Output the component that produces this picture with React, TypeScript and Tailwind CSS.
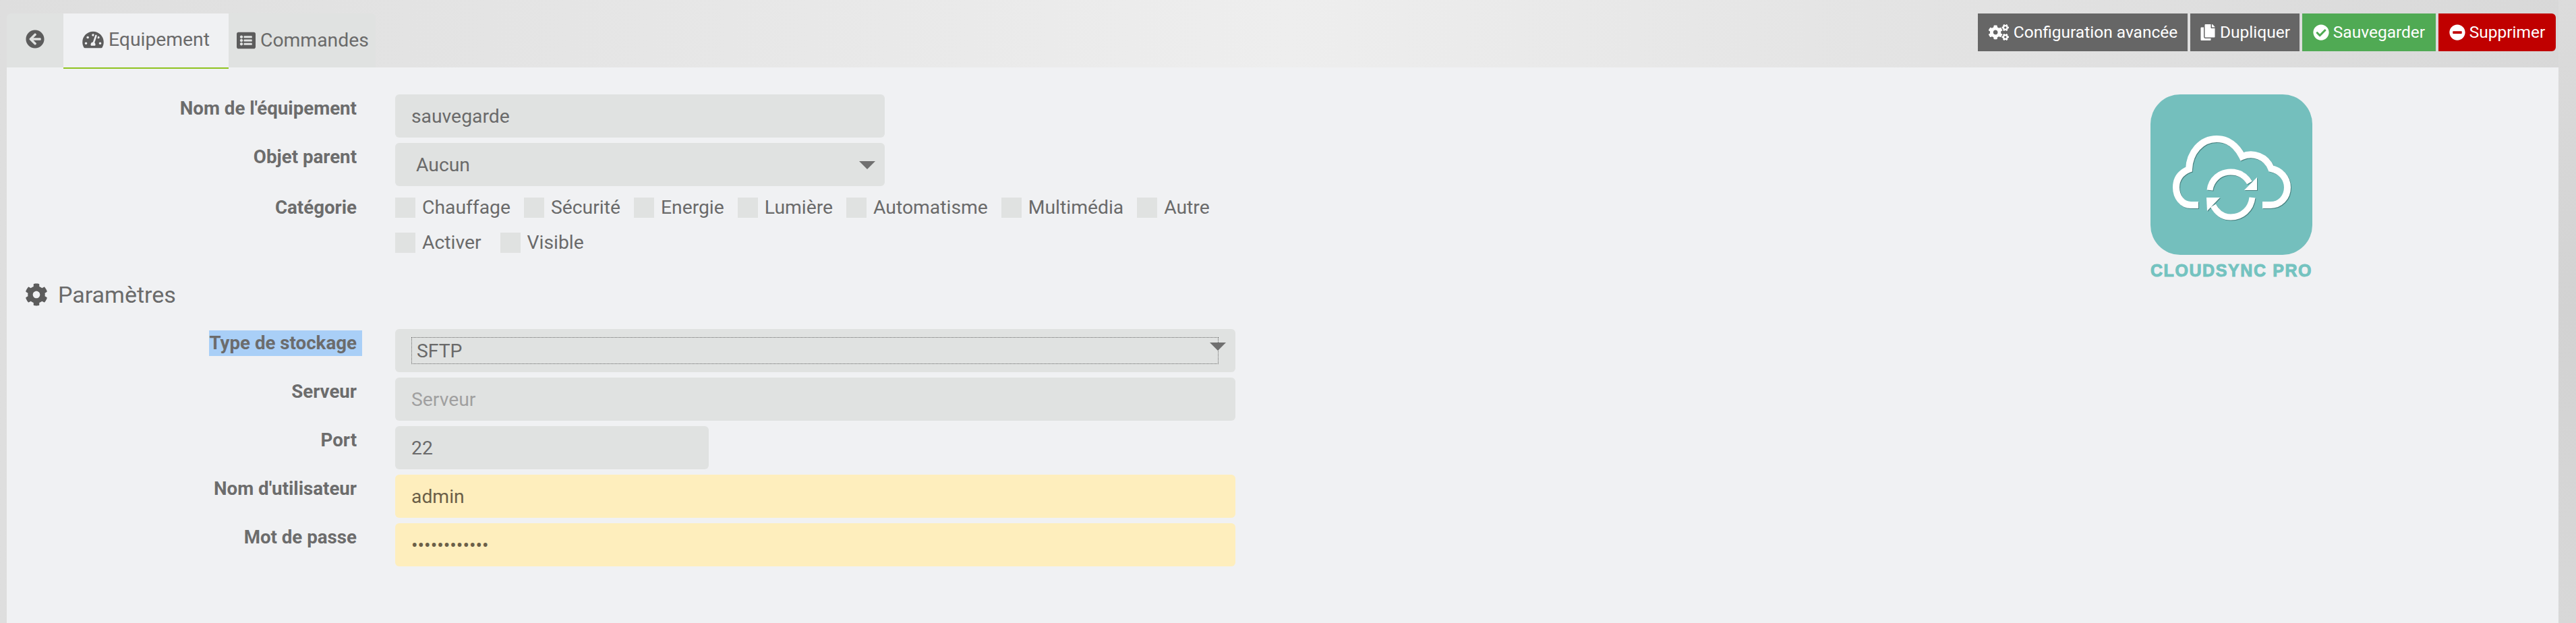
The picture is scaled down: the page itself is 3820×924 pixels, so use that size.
import { ReactNode } from "react";
import {
  FaArrowCircleLeft,
  FaTachometerAlt,
  FaListAlt,
  FaCog,
  FaCogs,
  FaCopy,
  FaCheckCircle,
  FaMinusCircle,
} from "react-icons/fa";

const Row = ({ label, selected, children }: { label: string; selected?: boolean; children: ReactNode }) => (
  <div className="flex">
    <div className="w-[519px] shrink-0 text-right font-bold text-[27.7px] text-[#6c6c6c] leading-[38px] mt-[2px]">
      {selected ? <span className="inline-block bg-[#a9cff7] pr-2 -mr-2 -mt-px">{label}</span> : label}
    </div>
    <div className="ml-[57px] flex-1">{children}</div>
  </div>
);

const Field = ({ children, className }: { children?: ReactNode; className: string }) => (
  <div className={`h-16 rounded-md flex items-center pl-6 pt-[2px] ${className}`}>{children}</div>
);

const Arrow = () => (
  <svg width="24" height="12" viewBox="0 0 24 12" className="shrink-0">
    <path d="M0 0H24L12 12Z" fill="#707070" />
  </svg>
);

const Check = ({ label }: { label: string }) => (
  <div className="flex items-center h-[30px]">
    <span className="w-[30px] h-[30px] bg-[#e0e2e1] mr-[10px]"></span>
    <span>{label}</span>
  </div>
);

const Btn = ({ icon, label, className }: { icon: ReactNode; label: string; className: string }) => (
  <div className={`h-14 flex items-center justify-center gap-[6px] text-white text-[24.5px] ${className}`}>
    {icon}
    <span>{label}</span>
  </div>
);

const Logo = () => (
  <div className="w-60 mr-[365px] shrink-0">
    <div className="h-[238px] rounded-[44px] bg-[#74bfbd] flex">
      <svg viewBox="0 0 240 238" className="w-60 h-[238px] drop-shadow-[1px_1px_0_rgba(40,80,80,0.55)]">
        <path
          d="M71 164H60C47 164 38 152 38 138C38 125 45 116 57 111C58 86 75 66 98 66C115 66 128 76 136 92C152 85 172 92 179 110C193 113 203 124 203 138C203 153 192 164 178 164H166"
          fill="none"
          stroke="#fff"
          strokeWidth="10"
        />
        <path d="M88 142C90 126 103 115 119 115C131 115 141 121 147 131" fill="none" stroke="#fff" strokeWidth="9" />
        <path d="M158 123V142H139Z" fill="#fff" />
        <path d="M151 153C149 170 136 182 119 182C108 182 99 176 93 165" fill="none" stroke="#fff" strokeWidth="9" />
        <path d="M83 153H103L84 173Z" fill="#fff" />
      </svg>
    </div>
    <div className="mt-[9px] flex justify-center text-[#74c3c0] font-['Liberation_Sans',sans-serif] font-bold text-[25px] leading-[28px] tracking-[1.6px] whitespace-nowrap [-webkit-text-stroke:1px_#74c3c0]">
      CLOUDSYNC PRO
    </div>
  </div>
);

export default function App() {
  return (
    <div className="w-[3820px] h-[924px] overflow-hidden flex bg-gradient-to-r from-[#dedede] via-[#eeeeee] to-[#d8d8d8] font-['Roboto',sans-serif] text-[28.3px] text-[#6a6a6a]">
      <div className="w-[10px] shrink-0"></div>
      <div className="flex-1 flex flex-col">
        <div className="h-[100px] pt-5 pr-1 flex justify-between items-start shrink-0">
          <div className="flex h-20 items-start">
            <div className="w-[84px] h-20 flex items-center justify-center bg-[#e0e2e1] rounded-tl-md text-[#5c5c5c]">
              <FaArrowCircleLeft className="w-7 h-7 -mt-1" />
            </div>
            <div className="relative z-10 w-[245px] h-[82px] pl-7 pb-[2px] flex items-center gap-[7px] bg-[#f0f1f3] border-b-2 border-[#8fc31f]">
              <FaTachometerAlt className="w-8 h-7 text-[#5c5c5c]" />
              <span>Equipement</span>
            </div>
            <div className="w-[218px] h-20 pl-3 flex items-center gap-[7px] bg-[#e0e2e1] rounded-tr-md">
              <FaListAlt className="w-7 h-7 text-[#5c5c5c]" />
              <span>Commandes</span>
            </div>
          </div>
          <div className="flex gap-1">
            <Btn icon={<FaCogs className="w-8 h-6" />} label="Configuration avancée" className="w-[311px] bg-[#666666]" />
            <Btn icon={<FaCopy className="w-6 h-6" />} label="Dupliquer" className="w-[162px] bg-[#666666]" />
            <Btn icon={<FaCheckCircle className="w-6 h-6" />} label="Sauvegarder" className="w-[198px] bg-[#50aa54]" />
            <Btn icon={<FaMinusCircle className="w-6 h-6" />} label="Supprimer" className="w-[174px] bg-[#c00000] rounded-r-md" />
          </div>
        </div>
        <div className="flex-1 bg-[#f0f1f3] pt-10 flex">
          <div className="w-[1822px] shrink-0">
            <div className="w-[1302px] flex flex-col gap-2">
              <Row label="Nom de l'équipement">
                <Field className="bg-[#e0e2e1]">sauvegarde</Field>
              </Row>
              <Row label="Objet parent">
                <Field className="bg-[#e0e2e1] justify-between pr-[14px]">
                  <span className="pl-[7px]">Aucun</span>
                  <Arrow />
                </Field>
              </Row>
            </div>
            <div className="flex mt-[17px]">
              <div className="w-[519px] shrink-0 text-right font-bold text-[27.7px] text-[#6c6c6c] leading-[30px]">Catégorie</div>
              <div className="ml-[57px] flex flex-col gap-[22px]">
                <div className="flex gap-[20px]">
                  <Check label="Chauffage" />
                  <Check label="Sécurité" />
                  <Check label="Energie" />
                  <Check label="Lumière" />
                  <Check label="Automatisme" />
                  <Check label="Multimédia" />
                  <Check label="Autre" />
                </div>
                <div className="flex gap-[28px]">
                  <Check label="Activer" />
                  <Check label="Visible" />
                </div>
              </div>
            </div>
            <div className="flex items-center h-10 mt-[42px] pl-[27px] gap-[15px] text-[34px]">
              <FaCog className="w-[34px] h-[34px] text-[#5c5c5c]" />
              <span>Paramètres</span>
            </div>
            <div className="flex flex-col gap-2 mt-[31px]">
              <Row label="Type de stockage" selected>
                <div className="h-16 rounded-md bg-[#e0e2e1] pl-6 pr-[25px] py-3 relative">
                  <div className="h-10 border border-dotted border-[#666666] pl-[7px] pt-[2px] flex items-center">SFTP</div>
                  <div className="absolute right-[14px] top-5 flex">
                    <Arrow />
                  </div>
                </div>
              </Row>
              <Row label="Serveur">
                <Field className="bg-[#e0e2e1] text-[#a0a0a0]">Serveur</Field>
              </Row>
              <Row label="Port">
                <Field className="bg-[#e0e2e1] w-[465px]">22</Field>
              </Row>
              <Row label="Nom d'utilisateur">
                <Field className="bg-[#feeebd] text-[#6b5f48]">admin</Field>
              </Row>
              <Row label="Mot de passe">
                <Field className="bg-[#feeebd] text-[#6b5f48]">
                  <span>••••••••••••</span>
                </Field>
              </Row>
            </div>
          </div>
          <div className="flex-1 flex justify-end">
            <Logo />
          </div>
        </div>
      </div>
      <div className="w-[26px] shrink-0 bg-gradient-to-b from-[#dcdcdc] via-[#d2d2d2] to-[#d8d8d8]"></div>
    </div>
  );
}
